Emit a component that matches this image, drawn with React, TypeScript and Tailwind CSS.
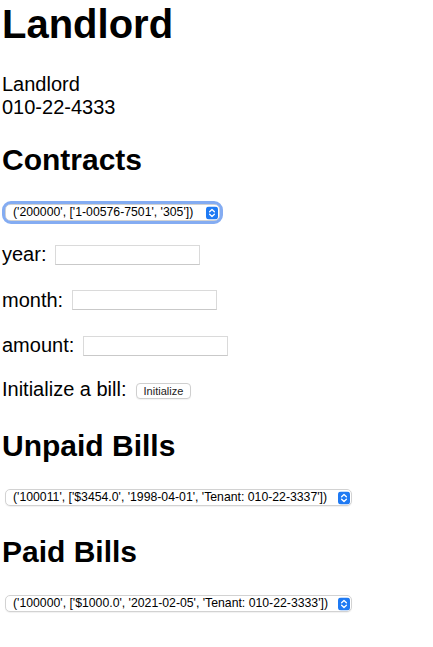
import React, { useState } from "react";

const contracts = ["('200000', ['1-00576-7501', '305'])"];
const unpaid = ["('100011', ['$3454.0', '1998-04-01', 'Tenant: 010-22-3337'])"];
const paid = ["('100000', ['$1000.0', '2021-02-05', 'Tenant: 010-22-3333'])"];

function Arrows() {
  return (
    <svg width="12" height="13" viewBox="0 0 12 13" className="pointer-events-none absolute right-[2px] top-1/2 -translate-y-1/2">
      <rect x="0" y="0" width="12" height="13" rx="3" fill="#1f7af3" />
      <path d="M3.6 5.3 L6 3 L8.4 5.3" fill="none" stroke="#fff" strokeWidth="1.3" strokeLinecap="round" strokeLinejoin="round" />
      <path d="M3.6 7.7 L6 10 L8.4 7.7" fill="none" stroke="#fff" strokeWidth="1.3" strokeLinecap="round" strokeLinejoin="round" />
    </svg>
  );
}

function Picker({ items, width, focused }: { items: string[]; width: string; focused?: boolean }) {
  const [val, setVal] = useState(items[0]);
  return (
    <div
      className={
        "relative ml-[3px] " +
        width +
        (focused ? " rounded-[6px] outline-[3px] outline-solid outline-[#84acf2]" : "")
      }
    >
      <select
        value={val}
        onChange={(e) => setVal(e.target.value)}
        className="block h-[17px] w-full appearance-none rounded-[5px] border border-[#d2d2d2] bg-white py-0 pl-[7px] pr-[18px] text-[12.25px] leading-[15px] text-black shadow-[0_1px_1px_rgba(0,0,0,0.06)] outline-none"
      >
        {items.map((it) => (
          <option key={it} value={it}>
            {it}
          </option>
        ))}
      </select>
      <Arrows />
    </div>
  );
}

function Field({ label, top }: { label: string; top: string }) {
  return (
    <div className={"flex h-[23px] items-center gap-[9px] " + top}>
      <span>{label}</span>
      <input
        type="text"
        className="h-[20px] w-[145px] border border-[#dadada] border-b-[#c9c9c9] bg-white px-1 text-[13px] outline-none"
      />
    </div>
  );
}

export default function App() {
  return (
    <div className="min-h-[647px] bg-white pl-[2px] font-['Liberation_Sans',Arial,sans-serif] text-[20px] leading-[23px] text-black">
      <h1 className="pt-[1px] text-[40px] font-bold leading-[46px]">Landlord</h1>

      <div className="mt-[26px]">
        <div>Landlord</div>
        <div>010-22-4333</div>
      </div>

      <h2 className="mt-[24px] text-[30px] font-bold leading-[34px]">Contracts</h2>
      <div className="mt-[27px]">
        <Picker items={contracts} width="w-[215px]" focused />
      </div>

      <Field label="year:" top="mt-[22px]" />
      <Field label="month:" top="mt-[22.5px]" />
      <Field label="amount:" top="mt-[22.5px]" />

      <div className="mt-[21px] flex h-[23px] items-center gap-[9px]">
        <span>Initialize a bill:</span>
        <button className="mt-[2px] h-[16px] rounded-[4px] border border-[#cfcfcf] bg-white px-[7px] text-[11px] leading-[14px] text-[#222] shadow-[0_1px_1px_rgba(0,0,0,0.05)]">
          Initialize
        </button>
      </div>

      <h2 className="mt-[28px] text-[30px] font-bold leading-[34px]">Unpaid Bills</h2>
      <div className="mt-[26px]">
        <Picker items={unpaid} width="w-[347px]" />
      </div>

      <h2 className="mt-[29px] text-[30px] font-bold leading-[34px]">Paid Bills</h2>
      <div className="mt-[26px]">
        <Picker items={paid} width="w-[347px]" />
      </div>
    </div>
  );
}
